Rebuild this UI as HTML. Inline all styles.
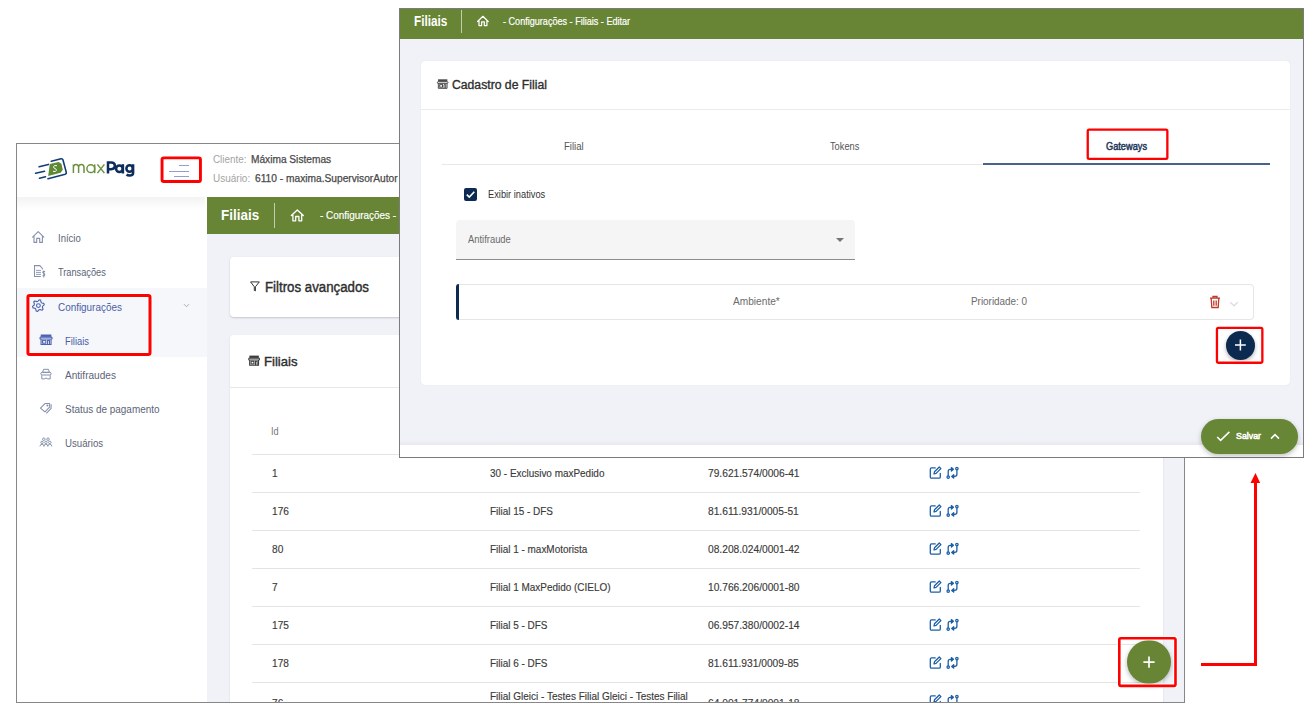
<!DOCTYPE html>
<html><head><meta charset="utf-8"><title>maxPag</title>
<style>
html,body{margin:0;padding:0}
body{width:1316px;height:714px;position:relative;overflow:hidden;background:#fff;font-family:"Liberation Sans",sans-serif}
.a{position:absolute}
.t{position:absolute;white-space:nowrap;line-height:1;transform-origin:0 0}
</style></head><body>

<!-- ================= BACKGROUND APP ================= -->
<div class="a" style="left:0;top:0;width:1316px;height:714px;clip-path:inset(144px 132px 12px 17px)">
  <div class="a" style="left:17px;top:144px;width:1168px;height:560px;background:#fff"></div>
  <div class="a" style="left:17px;top:197px;width:188px;height:13px;background:linear-gradient(#f3f3f3,#fff)"></div>
  <div class="a" style="left:17px;top:288px;width:190px;height:69px;background:#f6f7fa"></div>
  <div class="a" style="left:207px;top:197px;width:978px;height:37px;background:#678535"></div>
  <div class="a" style="left:274px;top:203px;width:1px;height:25px;background:rgba(255,255,255,.6)"></div>
  <svg class="a" style="left:288px;top:206px" width="20" height="18" viewBox="288 206 20 18"><path d="M291.3 215.6L297.3 210L303.3 215.6M292.9 214.9V220.8H295.7V216.5H298.9V220.8H301.7V214.9" fill="none" stroke="#fff" stroke-width="1.3" stroke-linejoin="round" stroke-linecap="round"/></svg>
  <div class="a" style="left:207px;top:234px;width:978px;height:470px;background:#f0f2f7"></div>
  <div class="a" style="left:230px;top:257px;width:933px;height:60px;background:#fff;border-radius:4px;box-shadow:0 1px 2px rgba(0,0,0,.18)"></div>
  <div class="a" style="left:230px;top:335px;width:933px;height:420px;background:#fff;border-radius:4px;box-shadow:0 1px 2px rgba(0,0,0,.12)"></div>
  <div class="a" style="left:230px;top:387px;width:933px;height:1px;background:#e8e8e8"></div>
  <svg class="a" style="left:248px;top:279px" width="14" height="15" viewBox="248 279 14 15"><path d="M250.6 281.9H259.3L255.4 286.8V290.9L254.3 290.4V286.8Z" fill="none" stroke="#333" stroke-width="1" stroke-linejoin="round"/></svg>
  <svg class="a" style="left:246px;top:353px" width="16" height="15" viewBox="246 353 16 15"><g transform="translate(248.2 355.6) scale(0.9833 1.0100)" fill="none" stroke="#3e3e3e" stroke-width="1.119"><rect x="1.2" y="0" width="9.6" height="2.3" fill="#3e3e3e" stroke="none"/><path d="M0.5 3.5Q0.5 2.5 1.3 2.5H10.7Q11.5 2.5 11.5 3.5Q11.5 4.3 10.8 4.3H1.2Q0.5 4.3 0.5 3.5Z"/><path d="M1.5 4.4V9.5H10.5V4.4"/><rect x="2.9" y="5.6" width="2.9" height="2.7"/><path d="M7.4 9.5V5.6H9.1V9.5"/></g></svg>
<div class="a" style="left:252px;top:454px;width:888px;height:1px;background:#e4e4e4"></div>
<div class="a" style="left:252px;top:492px;width:888px;height:1px;background:#e4e4e4"></div>
<div class="a" style="left:252px;top:530px;width:888px;height:1px;background:#e4e4e4"></div>
<div class="a" style="left:252px;top:568px;width:888px;height:1px;background:#e4e4e4"></div>
<div class="a" style="left:252px;top:606px;width:888px;height:1px;background:#e4e4e4"></div>
<div class="a" style="left:252px;top:644px;width:888px;height:1px;background:#e4e4e4"></div>
<div class="a" style="left:252px;top:682px;width:888px;height:1px;background:#e4e4e4"></div>
<svg class="a" style="left:927px;top:465px" width="34" height="16" viewBox="927 465 34 16"><g transform="translate(0 0)" fill="none" stroke="#1d5fa6" stroke-width="1.3" stroke-linecap="round" stroke-linejoin="round"><path d="M935.2 467.9H931.6Q930.3 467.9 930.3 469.2V476.9Q930.3 478.2 931.6 478.2H939Q940.3 478.2 940.3 476.9V473.5"/><path d="M939.3 467L940.9 468.6L936.1 473.4L934 473.9L934.5 471.8Z"/><circle cx="948.2" cy="477.1" r="1.2"/><circle cx="956.9" cy="468.6" r="1.2"/><path d="M948.2 475.8V471.4Q948.2 469.3 950.3 469.3H952.3"/><path d="M956.9 469.9V474.3Q956.9 476.4 954.8 476.4H953.2"/><path d="M951.4 467.6L953.4 469.3L951.4 471Z" fill="#1d5fa6"/><path d="M953.7 474.7L951.7 476.4L953.7 478.1Z" fill="#1d5fa6"/></g></svg>
<svg class="a" style="left:927px;top:503px" width="34" height="16" viewBox="927 503 34 16"><g transform="translate(0 38)" fill="none" stroke="#1d5fa6" stroke-width="1.3" stroke-linecap="round" stroke-linejoin="round"><path d="M935.2 467.9H931.6Q930.3 467.9 930.3 469.2V476.9Q930.3 478.2 931.6 478.2H939Q940.3 478.2 940.3 476.9V473.5"/><path d="M939.3 467L940.9 468.6L936.1 473.4L934 473.9L934.5 471.8Z"/><circle cx="948.2" cy="477.1" r="1.2"/><circle cx="956.9" cy="468.6" r="1.2"/><path d="M948.2 475.8V471.4Q948.2 469.3 950.3 469.3H952.3"/><path d="M956.9 469.9V474.3Q956.9 476.4 954.8 476.4H953.2"/><path d="M951.4 467.6L953.4 469.3L951.4 471Z" fill="#1d5fa6"/><path d="M953.7 474.7L951.7 476.4L953.7 478.1Z" fill="#1d5fa6"/></g></svg>
<svg class="a" style="left:927px;top:541px" width="34" height="16" viewBox="927 541 34 16"><g transform="translate(0 76)" fill="none" stroke="#1d5fa6" stroke-width="1.3" stroke-linecap="round" stroke-linejoin="round"><path d="M935.2 467.9H931.6Q930.3 467.9 930.3 469.2V476.9Q930.3 478.2 931.6 478.2H939Q940.3 478.2 940.3 476.9V473.5"/><path d="M939.3 467L940.9 468.6L936.1 473.4L934 473.9L934.5 471.8Z"/><circle cx="948.2" cy="477.1" r="1.2"/><circle cx="956.9" cy="468.6" r="1.2"/><path d="M948.2 475.8V471.4Q948.2 469.3 950.3 469.3H952.3"/><path d="M956.9 469.9V474.3Q956.9 476.4 954.8 476.4H953.2"/><path d="M951.4 467.6L953.4 469.3L951.4 471Z" fill="#1d5fa6"/><path d="M953.7 474.7L951.7 476.4L953.7 478.1Z" fill="#1d5fa6"/></g></svg>
<svg class="a" style="left:927px;top:579px" width="34" height="16" viewBox="927 579 34 16"><g transform="translate(0 114)" fill="none" stroke="#1d5fa6" stroke-width="1.3" stroke-linecap="round" stroke-linejoin="round"><path d="M935.2 467.9H931.6Q930.3 467.9 930.3 469.2V476.9Q930.3 478.2 931.6 478.2H939Q940.3 478.2 940.3 476.9V473.5"/><path d="M939.3 467L940.9 468.6L936.1 473.4L934 473.9L934.5 471.8Z"/><circle cx="948.2" cy="477.1" r="1.2"/><circle cx="956.9" cy="468.6" r="1.2"/><path d="M948.2 475.8V471.4Q948.2 469.3 950.3 469.3H952.3"/><path d="M956.9 469.9V474.3Q956.9 476.4 954.8 476.4H953.2"/><path d="M951.4 467.6L953.4 469.3L951.4 471Z" fill="#1d5fa6"/><path d="M953.7 474.7L951.7 476.4L953.7 478.1Z" fill="#1d5fa6"/></g></svg>
<svg class="a" style="left:927px;top:617px" width="34" height="16" viewBox="927 617 34 16"><g transform="translate(0 152)" fill="none" stroke="#1d5fa6" stroke-width="1.3" stroke-linecap="round" stroke-linejoin="round"><path d="M935.2 467.9H931.6Q930.3 467.9 930.3 469.2V476.9Q930.3 478.2 931.6 478.2H939Q940.3 478.2 940.3 476.9V473.5"/><path d="M939.3 467L940.9 468.6L936.1 473.4L934 473.9L934.5 471.8Z"/><circle cx="948.2" cy="477.1" r="1.2"/><circle cx="956.9" cy="468.6" r="1.2"/><path d="M948.2 475.8V471.4Q948.2 469.3 950.3 469.3H952.3"/><path d="M956.9 469.9V474.3Q956.9 476.4 954.8 476.4H953.2"/><path d="M951.4 467.6L953.4 469.3L951.4 471Z" fill="#1d5fa6"/><path d="M953.7 474.7L951.7 476.4L953.7 478.1Z" fill="#1d5fa6"/></g></svg>
<svg class="a" style="left:927px;top:655px" width="34" height="16" viewBox="927 655 34 16"><g transform="translate(0 190)" fill="none" stroke="#1d5fa6" stroke-width="1.3" stroke-linecap="round" stroke-linejoin="round"><path d="M935.2 467.9H931.6Q930.3 467.9 930.3 469.2V476.9Q930.3 478.2 931.6 478.2H939Q940.3 478.2 940.3 476.9V473.5"/><path d="M939.3 467L940.9 468.6L936.1 473.4L934 473.9L934.5 471.8Z"/><circle cx="948.2" cy="477.1" r="1.2"/><circle cx="956.9" cy="468.6" r="1.2"/><path d="M948.2 475.8V471.4Q948.2 469.3 950.3 469.3H952.3"/><path d="M956.9 469.9V474.3Q956.9 476.4 954.8 476.4H953.2"/><path d="M951.4 467.6L953.4 469.3L951.4 471Z" fill="#1d5fa6"/><path d="M953.7 474.7L951.7 476.4L953.7 478.1Z" fill="#1d5fa6"/></g></svg>
<svg class="a" style="left:927px;top:693px" width="34" height="16" viewBox="927 693 34 16"><g transform="translate(0 228)" fill="none" stroke="#1d5fa6" stroke-width="1.3" stroke-linecap="round" stroke-linejoin="round"><path d="M935.2 467.9H931.6Q930.3 467.9 930.3 469.2V476.9Q930.3 478.2 931.6 478.2H939Q940.3 478.2 940.3 476.9V473.5"/><path d="M939.3 467L940.9 468.6L936.1 473.4L934 473.9L934.5 471.8Z"/><circle cx="948.2" cy="477.1" r="1.2"/><circle cx="956.9" cy="468.6" r="1.2"/><path d="M948.2 475.8V471.4Q948.2 469.3 950.3 469.3H952.3"/><path d="M956.9 469.9V474.3Q956.9 476.4 954.8 476.4H953.2"/><path d="M951.4 467.6L953.4 469.3L951.4 471Z" fill="#1d5fa6"/><path d="M953.7 474.7L951.7 476.4L953.7 478.1Z" fill="#1d5fa6"/></g></svg>
  <div class="a" style="left:1127px;top:640px;width:44px;height:44px;border-radius:50%;background:#678535;box-shadow:0 2px 5px rgba(0,0,0,.28)"></div>
  <svg class="a" style="left:1140px;top:653px" width="19" height="19" viewBox="1140 653 19 19"><path d="M1143.4 662.2H1154.6M1149 656.6V667.8" stroke="#fff" stroke-width="1.7"/></svg>
  <!-- logo -->
  <svg class="a" style="left:30px;top:150px" width="110" height="32" viewBox="30 150 110 32">
    <g fill="none" stroke="#123d75" stroke-width="1.6" stroke-linecap="round" stroke-linejoin="round">
      <path d="M39.1 166.8L48.4 164.4M35.6 173.2L44.5 171.2M39.5 178.3L45.5 176.7"/>
      <path d="M51.3 161.3L61 158.8Q62.6 158.5 63 160L66.3 172.4Q66.6 173.8 65.2 174.2L48 178.7"/>
    </g>
    <path d="M49.8 164L58.6 162.1L61.4 163.8L62.8 169.7L60.6 172.8L48.2 176Z" fill="#5f8a35"/>
    <path d="M56.6 165.6Q54.2 165 53.6 166.5Q53.2 167.9 55 168.5Q56.6 169 56.4 170.5Q55.8 172.2 53.4 171.4" fill="none" stroke="#fff" stroke-width="1" stroke-linecap="round"/>
    <g fill="none" stroke="#6b9140" stroke-width="1.5">
      <path d="M73.4 173.1V164.4M73.4 168Q73.4 164.4 76 164.4Q78.6 164.4 78.6 167.2V173.1M78.6 167.2Q78.6 164.4 81.4 164.4Q84 164.4 84 167.5V173.1"/>
      <circle cx="90.8" cy="168.7" r="3.9"/><path d="M94.7 164.4V173.1"/>
      <path d="M97.4 164.4L104.4 173.1M104.4 164.4L97.4 173.1"/>
    </g>
    <g fill="none" stroke="#0d2d5c" stroke-width="2.5">
      <path d="M108 173.6V162.4H111.2Q114.9 162.4 114.9 165.8Q114.9 169.2 111.2 169.2H108"/>
      <circle cx="119.4" cy="168.7" r="3.3"/><path d="M122.9 164.2V173.5"/>
      <circle cx="129.6" cy="168.5" r="3.2"/><path d="M133.1 164.2V173Q133.1 175.5 129.6 175.5Q127.6 175.5 126.6 174.5"/>
    </g>
  </svg>
  <!-- hamburger -->
  <div class="a" style="left:179px;top:165px;width:10px;height:1px;background:#8ea0cf"></div>
  <div class="a" style="left:169px;top:171px;width:20px;height:1px;background:#8ea0cf"></div>
  <div class="a" style="left:174px;top:176px;width:15px;height:1px;background:#8ea0cf"></div>
  <!-- sidebar icons -->
  <svg class="a" style="left:30px;top:228px" width="18" height="17" viewBox="30 228 18 17"><path d="M32.6 237.2L38.2 231.6L43.8 237.2M34 236V242.4H36.7V238.4H39.7V242.4H42.4V236" fill="none" stroke="#8690aa" stroke-width="1.1" stroke-linejoin="round" stroke-linecap="round"/></svg>
  <svg class="a" style="left:30px;top:262px" width="18" height="18" viewBox="30 262 18 18"><g fill="none" stroke="#8690aa" stroke-width="1.05"><path d="M40.8 276.5H34.5V265.6H39.8L42.4 268.4V269.4"/><path d="M36 270.4H41M36 272.4H41M36 274.4H41" stroke-width=".9"/><path d="M45 271.8Q44.3 271 43.3 271.4Q42.4 272 43.1 272.9L44.3 273.7Q45.2 274.6 44.4 275.6Q43.5 276.3 42.4 275.6M43.8 270.4V277.6"/></g></svg>
  <svg class="a" style="left:30px;top:297px" width="18" height="18" viewBox="30 297 18 18"><path d="M37.84 301.34L39.17 299.75L40.66 300.15L41.02 302.19L41.81 302.98L43.85 303.34L44.25 304.83L42.66 306.16L42.37 307.25L43.08 309.19L41.99 310.28L40.05 309.57L38.96 309.86L37.63 311.45L36.14 311.05L35.78 309.01L34.99 308.22L32.95 307.86L32.55 306.37L34.14 305.04L34.43 303.95L33.72 302.01L34.81 300.92L36.75 301.63Z" fill="none" stroke="#4b62b0" stroke-width="1.1" stroke-linejoin="round"/><circle cx="38.4" cy="305.6" r="1.9" fill="none" stroke="#4b62b0" stroke-width="1.1"/></svg>
  <svg class="a" style="left:38px;top:332px" width="16" height="15" viewBox="38 332 16 15"><g transform="translate(39.4 334.5) scale(1.1083 1.0500)" fill="none" stroke="#4b62b0" stroke-width="0.992"><rect x="1.2" y="0" width="9.6" height="2.3" fill="#4b62b0" stroke="none"/><path d="M0.5 3.5Q0.5 2.5 1.3 2.5H10.7Q11.5 2.5 11.5 3.5Q11.5 4.3 10.8 4.3H1.2Q0.5 4.3 0.5 3.5Z"/><path d="M1.5 4.4V9.5H10.5V4.4"/><rect x="2.9" y="5.6" width="2.9" height="2.7"/><path d="M7.4 9.5V5.6H9.1V9.5"/></g></svg>
  <svg class="a" style="left:38px;top:366px" width="16" height="16" viewBox="38 366 16 16"><g fill="none" stroke="#8690aa" stroke-width="1" stroke-linejoin="round"><path d="M43.6 369.3H48.4L49.4 372.3H42.6Z"/><path d="M42.2 372.4H49.8Q51.2 372.4 51.2 373.7Q51.2 375 49.8 375H42.2Q40.8 375 40.8 373.7Q40.8 372.4 42.2 372.4Z"/><path d="M41.8 375.2V378.9H44.2Q46 377.2 47.8 378.9H50.2V375.2"/></g></svg>
  <svg class="a" style="left:38px;top:400px" width="16" height="16" viewBox="38 400 16 16"><g fill="none" stroke="#8690aa" stroke-width="1.05" stroke-linejoin="round"><path d="M40.5 408.1L45.2 403.4H49.6V407.2L44.9 411.9Z"/><path d="M51.1 404.2V408.4L46.4 413.3"/><circle cx="47.4" cy="405.4" r=".5"/></g></svg>
  <svg class="a" style="left:38px;top:434px" width="17" height="15" viewBox="38 434 17 15"><g fill="none" stroke="#8690aa" stroke-width="0.95"><circle cx="43.8" cy="439.2" r="1.25"/><circle cx="48" cy="439.2" r="1.25"/><circle cx="42" cy="442.4" r="1.2"/><circle cx="45.9" cy="442.4" r="1.2"/><circle cx="49.8" cy="442.4" r="1.2"/><path d="M40 446.4Q40 444.2 42 444.2Q44 444.2 44 446.4M43.9 446.4Q43.9 444.2 45.9 444.2Q47.9 444.2 47.9 446.4M47.8 446.4Q47.8 444.2 49.8 444.2Q51.8 444.2 51.8 446.4"/></g></svg>
  <svg class="a" style="left:182px;top:302px" width="9" height="7" viewBox="182 302 9 7"><path d="M184 304.2L186.5 306.7L189 304.2" fill="none" stroke="#9aa3b8" stroke-width="0.9"/></svg>
<div class="t" style="left:213.00px;top:154.73px;font-size:10px;color:#a3a3a3;transform:scaleX(0.9841)">Cliente:</div>
<div class="t" style="left:251.40px;top:154.73px;font-size:10px;-webkit-text-stroke:0.25px #4a4a4a;color:#4a4a4a;transform:scaleX(1.0151)">Máxima Sistemas</div>
<div class="t" style="left:213.00px;top:173.73px;font-size:10px;color:#a3a3a3;transform:scaleX(0.9984)">Usuário:</div>
<div class="t" style="left:254.70px;top:173.73px;font-size:10px;-webkit-text-stroke:0.25px #4a4a4a;color:#4a4a4a;transform:scaleX(1.0196)">6110 - maxima.SupervisorAutor</div>
<div class="t" style="left:221.10px;top:207.30px;font-size:15px;font-weight:700;color:#ffffff;transform:scaleX(0.8986)">Filiais</div>
<div class="t" style="left:320.00px;top:210.09px;font-size:11px;-webkit-text-stroke:0.2px #ffffff;color:#ffffff;transform:scaleX(0.9000)">- Configurações - Filiais - Editar</div>
<div class="t" style="left:265.05px;top:280.15px;font-size:14px;-webkit-text-stroke:0.4px #2e2e2e;color:#2e2e2e;transform:scaleX(0.9474)">Filtros avançados</div>
<div class="t" style="left:263.99px;top:354.99px;font-size:13px;-webkit-text-stroke:0.4px #2e2e2e;color:#2e2e2e;transform:scaleX(1.0084)">Filiais</div>
<div class="t" style="left:271.40px;top:426.53px;font-size:10px;color:#7a7a7a;transform:scaleX(0.9200)">Id</div>
<div class="t" style="left:271.50px;top:467.69px;font-size:11px;-webkit-text-stroke:0.15px #3a3a3a;color:#3a3a3a;transform:scaleX(0.9200)">1</div>
<div class="t" style="left:490.00px;top:467.69px;font-size:11px;-webkit-text-stroke:0.15px #3a3a3a;color:#3a3a3a;transform:scaleX(0.9040)">30 - Exclusivo maxPedido</div>
<div class="t" style="left:708.00px;top:467.69px;font-size:11px;-webkit-text-stroke:0.15px #3a3a3a;color:#3a3a3a;transform:scaleX(0.9292)">79.621.574/0006-41</div>
<div class="t" style="left:271.50px;top:505.69px;font-size:11px;-webkit-text-stroke:0.15px #3a3a3a;color:#3a3a3a;transform:scaleX(0.9200)">176</div>
<div class="t" style="left:490.00px;top:505.69px;font-size:11px;-webkit-text-stroke:0.15px #3a3a3a;color:#3a3a3a;transform:scaleX(0.9040)">Filial 15 - DFS</div>
<div class="t" style="left:708.00px;top:505.69px;font-size:11px;-webkit-text-stroke:0.15px #3a3a3a;color:#3a3a3a;transform:scaleX(0.9292)">81.611.931/0005-51</div>
<div class="t" style="left:271.50px;top:543.69px;font-size:11px;-webkit-text-stroke:0.15px #3a3a3a;color:#3a3a3a;transform:scaleX(0.9200)">80</div>
<div class="t" style="left:490.00px;top:543.69px;font-size:11px;-webkit-text-stroke:0.15px #3a3a3a;color:#3a3a3a;transform:scaleX(0.9040)">Filial 1 - maxMotorista</div>
<div class="t" style="left:708.00px;top:543.69px;font-size:11px;-webkit-text-stroke:0.15px #3a3a3a;color:#3a3a3a;transform:scaleX(0.9292)">08.208.024/0001-42</div>
<div class="t" style="left:271.50px;top:581.69px;font-size:11px;-webkit-text-stroke:0.15px #3a3a3a;color:#3a3a3a;transform:scaleX(0.9200)">7</div>
<div class="t" style="left:490.00px;top:581.69px;font-size:11px;-webkit-text-stroke:0.15px #3a3a3a;color:#3a3a3a;transform:scaleX(0.9040)">Filial 1 MaxPedido (CIELO)</div>
<div class="t" style="left:708.00px;top:581.69px;font-size:11px;-webkit-text-stroke:0.15px #3a3a3a;color:#3a3a3a;transform:scaleX(0.9292)">10.766.206/0001-80</div>
<div class="t" style="left:271.50px;top:619.69px;font-size:11px;-webkit-text-stroke:0.15px #3a3a3a;color:#3a3a3a;transform:scaleX(0.9200)">175</div>
<div class="t" style="left:490.00px;top:619.69px;font-size:11px;-webkit-text-stroke:0.15px #3a3a3a;color:#3a3a3a;transform:scaleX(0.9040)">Filial 5 - DFS</div>
<div class="t" style="left:708.00px;top:619.69px;font-size:11px;-webkit-text-stroke:0.15px #3a3a3a;color:#3a3a3a;transform:scaleX(0.9292)">06.957.380/0002-14</div>
<div class="t" style="left:271.50px;top:657.69px;font-size:11px;-webkit-text-stroke:0.15px #3a3a3a;color:#3a3a3a;transform:scaleX(0.9200)">178</div>
<div class="t" style="left:490.00px;top:657.69px;font-size:11px;-webkit-text-stroke:0.15px #3a3a3a;color:#3a3a3a;transform:scaleX(0.9040)">Filial 6 - DFS</div>
<div class="t" style="left:708.00px;top:657.69px;font-size:11px;-webkit-text-stroke:0.15px #3a3a3a;color:#3a3a3a;transform:scaleX(0.9292)">81.611.931/0009-85</div>
<div class="t" style="left:271.50px;top:698.19px;font-size:11px;-webkit-text-stroke:0.15px #3a3a3a;color:#3a3a3a;transform:scaleX(0.9200)">76</div>
<div class="t" style="left:708.00px;top:698.19px;font-size:11px;-webkit-text-stroke:0.15px #3a3a3a;color:#3a3a3a;transform:scaleX(0.9292)">64.001.774/0001-18</div>
<div class="t" style="left:490.00px;top:690.99px;font-size:11px;-webkit-text-stroke:0.15px #3a3a3a;color:#3a3a3a;transform:scaleX(0.9083)">Filial Gleici - Testes Filial Gleici - Testes Filial</div>
<div class="t" style="left:58.00px;top:233.88px;font-size:10.3px;color:#5c6478;transform:scaleX(0.9243)">Início</div>
<div class="t" style="left:58.00px;top:267.88px;font-size:10.3px;color:#5c6478;transform:scaleX(0.8955)">Transações</div>
<div class="t" style="left:57.70px;top:302.88px;font-size:10.3px;color:#4b5ea8;transform:scaleX(0.9615)">Configurações</div>
<div class="t" style="left:65.40px;top:336.68px;font-size:10.3px;color:#4b5ea8;transform:scaleX(0.9134)">Filiais</div>
<div class="t" style="left:65.40px;top:370.88px;font-size:10.3px;color:#5c6478;transform:scaleX(0.9781)">Antifraudes</div>
<div class="t" style="left:65.40px;top:405.08px;font-size:10.3px;color:#5c6478;transform:scaleX(0.9657)">Status de pagamento</div>
<div class="t" style="left:65.40px;top:439.28px;font-size:10.3px;color:#5c6478;transform:scaleX(0.9387)">Usuários</div>
</div>
<div class="a" style="left:16px;top:143px;width:1169px;height:560px;box-sizing:border-box;border:1px solid #878787"></div>

<!-- ================= OVERLAY ================= -->
<div class="a" style="left:399px;top:8px;width:905px;height:450px;box-sizing:border-box;border:1px solid #7b7b7b;background:#fff"></div>
<div class="a" style="left:400px;top:9px;width:903px;height:30px;background:#678535"></div>
<div class="a" style="left:400px;top:39px;width:903px;height:406px;background:#f0f2f7"></div>
<div class="a" style="left:400px;top:440px;width:903px;height:5px;background:linear-gradient(rgba(0,0,0,0),rgba(0,0,0,.04))"></div>
<div class="a" style="left:461px;top:10px;width:1px;height:23px;background:rgba(255,255,255,.6)"></div>
<svg class="a" style="left:474px;top:13px" width="18" height="16" viewBox="474 13 18 16"><path d="M477.6 21.5L482.9 16.3L488.2 21.5M479 20.8V25.6H481.6V21.9H484.3V25.6H486.9V20.8" fill="none" stroke="#fff" stroke-width="1.25" stroke-linejoin="round" stroke-linecap="round"/></svg>
<div class="a" style="left:421px;top:61px;width:869px;height:324px;background:#fff;border-radius:4px;box-shadow:0 0 1px rgba(0,0,0,.15)"></div>
<div class="a" style="left:421px;top:109px;width:869px;height:1px;background:#ebebeb"></div>
<svg class="a" style="left:435px;top:77px" width="15" height="14" viewBox="435 77 15 14"><g transform="translate(436.9 79.3) scale(0.9667 0.9500)" fill="none" stroke="#4a4a4a" stroke-width="1.034"><rect x="1.2" y="0" width="9.6" height="2.3" fill="#4a4a4a" stroke="none"/><path d="M0.5 3.5Q0.5 2.5 1.3 2.5H10.7Q11.5 2.5 11.5 3.5Q11.5 4.3 10.8 4.3H1.2Q0.5 4.3 0.5 3.5Z"/><path d="M1.5 4.4V9.5H10.5V4.4"/><rect x="2.9" y="5.6" width="2.9" height="2.7"/><path d="M7.4 9.5V5.6H9.1V9.5"/></g></svg>
<div class="a" style="left:442px;top:164px;width:828px;height:1px;background:#e8e8e8"></div>
<div class="a" style="left:983px;top:163px;width:287px;height:2px;background:#46648a"></div>
<div class="a" style="left:464px;top:188px;width:13px;height:13px;background:#0d2b52;border-radius:2px"></div>
<svg class="a" style="left:464px;top:188px" width="13" height="13" viewBox="0 0 13 13"><path d="M2.8 6.6L5.3 9.1L10.3 3.8" fill="none" stroke="#fff" stroke-width="1.6"/></svg>
<div class="a" style="left:456px;top:220px;width:399px;height:39px;background:#f5f5f5;border-radius:4px 4px 0 0"></div>
<div class="a" style="left:456px;top:259px;width:399px;height:1px;background:#8c8c8c"></div>
<svg class="a" style="left:835px;top:237px" width="10" height="6" viewBox="0 0 10 6"><path d="M1 1H9L5 5Z" fill="#757575"/></svg>
<div class="a" style="left:456px;top:284px;width:798px;height:36px;box-sizing:border-box;border:1px solid #e6e6e6;border-left:none;border-radius:0 4px 4px 0;background:#fff"></div>
<div class="a" style="left:456px;top:284px;width:3px;height:36px;background:#0d2b52;border-radius:3px 0 0 3px"></div>
<svg class="a" style="left:1208px;top:295px" width="14" height="14" viewBox="0 0 14 14"><g fill="none" stroke="#c0392b" stroke-width="1.3"><path d="M2 3.2H12M5 3V1.5H9V3M3.2 3.5L3.8 12.5H10.2L10.8 3.5M5.8 5.5V10.8M8.2 5.5V10.8"/></g></svg>
<svg class="a" style="left:1229px;top:300px" width="10" height="8" viewBox="0 0 10 8"><path d="M1.2 2.2L5 5.8L8.8 2.2" fill="none" stroke="#d9dce4" stroke-width="1.2"/></svg>
<div class="a" style="left:1226px;top:330.5px;width:29px;height:29px;border-radius:50%;background:#0c2a50;box-shadow:0 2px 4px rgba(0,0,0,.3)"></div>
<svg class="a" style="left:1230px;top:335px" width="21" height="21" viewBox="1230 335 21 21"><path d="M1235 345H1245.8M1240.4 339.6V350.4" stroke="#fff" stroke-width="1.5"/></svg>
<div class="a" style="left:1201px;top:419px;width:97px;height:35px;border-radius:18px;background:#678636;box-shadow:0 2px 5px rgba(0,0,0,.25)"></div>
<svg class="a" style="left:1215px;top:430px" width="17" height="13" viewBox="0 0 17 13"><path d="M2.2 7L5.6 10.4L14.4 1.9" fill="none" stroke="#fff" stroke-width="1.5"/></svg>
<svg class="a" style="left:1269px;top:432px" width="12" height="9" viewBox="0 0 12 9"><path d="M2 6.6L6 2.7L10 6.6" fill="none" stroke="#fff" stroke-width="1.6"/></svg>
<div class="t" style="left:413.50px;top:14.05px;font-size:14px;font-weight:700;color:#ffffff;transform:scaleX(0.8397)">Filiais</div>
<div class="t" style="left:503.30px;top:16.53px;font-size:10px;-webkit-text-stroke:0.2px #ffffff;color:#ffffff;transform:scaleX(0.9075)">- Configurações - Filiais - Editar</div>
<div class="t" style="left:452.20px;top:79.04px;font-size:12px;-webkit-text-stroke:0.35px #2e2e2e;color:#2e2e2e;transform:scaleX(1.0161)">Cadastro de Filial</div>
<div class="t" style="left:564.30px;top:142.23px;font-size:10px;color:#555555;transform:scaleX(0.9589)">Filial</div>
<div class="t" style="left:830.40px;top:141.93px;font-size:10px;color:#555555;transform:scaleX(0.9247)">Tokens</div>
<div class="t" style="left:1105.70px;top:142.33px;font-size:10px;-webkit-text-stroke:0.45px #1b3658;color:#1b3658;transform:scaleX(0.9221)">Gateways</div>
<div class="t" style="left:488.00px;top:189.83px;font-size:10px;color:#333333;transform:scaleX(0.9272)">Exibir inativos</div>
<div class="t" style="left:467.70px;top:234.93px;font-size:10px;color:#6b6b6b;transform:scaleX(0.9386)">Antifraude</div>
<div class="t" style="left:732.50px;top:296.83px;font-size:10px;color:#6b6b6b;transform:scaleX(1.0141)">Ambiente*</div>
<div class="t" style="left:971.20px;top:297.23px;font-size:10px;color:#6b6b6b;transform:scaleX(0.9888)">Prioridade: 0</div>
<div class="t" style="left:1236.40px;top:431.34px;font-size:9.4px;-webkit-text-stroke:0.55px #ffffff;color:#ffffff;transform:scaleX(0.9414)">Salvar</div>

<!-- ================= ANNOTATIONS ================= -->
<svg class="a" style="left:0;top:0" width="1316" height="714" viewBox="0 0 1316 714"><rect x="162.05" y="157.85" width="38.40" height="23.60" rx="1.74" fill="none" stroke="rgba(255,255,255,.8)" stroke-width="5.1"/><rect x="27.90" y="295.50" width="122.10" height="59.10" rx="1.80" fill="none" stroke="rgba(255,255,255,.8)" stroke-width="5.2"/><rect x="1087.75" y="129.55" width="79.60" height="29.30" rx="1.38" fill="none" stroke="rgba(255,255,255,.8)" stroke-width="4.5"/><rect x="1216.95" y="327.95" width="45.40" height="34.80" rx="1.38" fill="none" stroke="rgba(255,255,255,.8)" stroke-width="4.5"/><rect x="1119.30" y="638.20" width="56.20" height="47.70" rx="1.56" fill="none" stroke="rgba(255,255,255,.8)" stroke-width="4.8"/><rect x="162.05" y="157.85" width="38.40" height="23.60" rx="1.74" fill="none" stroke="#f00" stroke-width="2.9"/><rect x="27.90" y="295.50" width="122.10" height="59.10" rx="1.80" fill="none" stroke="#f00" stroke-width="3"/><rect x="1087.75" y="129.55" width="79.60" height="29.30" rx="1.38" fill="none" stroke="#f00" stroke-width="2.3"/><rect x="1216.95" y="327.95" width="45.40" height="34.80" rx="1.38" fill="none" stroke="#f00" stroke-width="2.3"/><rect x="1119.30" y="638.20" width="56.20" height="47.70" rx="1.56" fill="none" stroke="#f00" stroke-width="2.6"/></svg>
<div class="a" style="left:1201px;top:663px;width:56px;height:3px;background:#f00"></div>
<div class="a" style="left:1254px;top:481px;width:3px;height:185px;background:#f00"></div>
<svg class="a" style="left:1249px;top:472px" width="13" height="12" viewBox="0 0 13 12"><path d="M6.5 1L11.2 11H1.5Z" fill="#f00"/></svg>
</body></html>
